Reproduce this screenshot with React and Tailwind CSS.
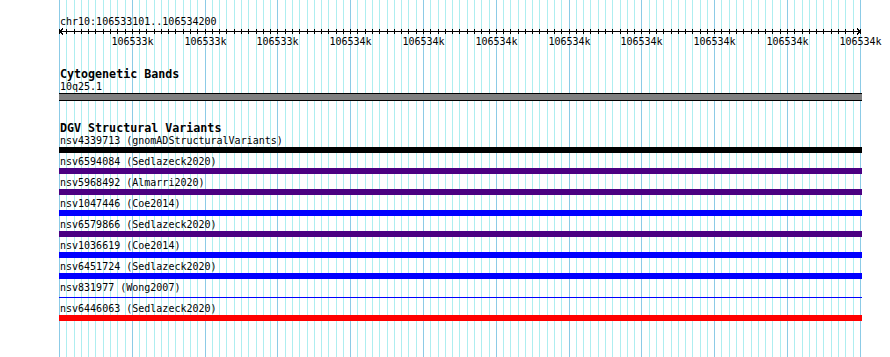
import React from 'react';

const LEFT = 59;
const STEP = 7.28; // one minor division = 10 bp
const gx = (i) => Math.round(LEFT + i * STEP) + 0.5;

const tickLabels = [
  '106533k', '106533k', '106533k',
  '106534k', '106534k', '106534k', '106534k',
  '106534k', '106534k', '106534k', '106534k',
];

const variants = [
  { id: 'nsv4339713', src: 'gnomADStructuralVariants', color: 'bg-black' },
  { id: 'nsv6594084', src: 'Sedlazeck2020', color: 'bg-[#4b0082]' },
  { id: 'nsv5968492', src: 'Almarri2020', color: 'bg-[#4b0082]' },
  { id: 'nsv1047446', src: 'Coe2014', color: 'bg-[#0000ff]' },
  { id: 'nsv6579866', src: 'Sedlazeck2020', color: 'bg-[#4b0082]' },
  { id: 'nsv1036619', src: 'Coe2014', color: 'bg-[#0000ff]' },
  { id: 'nsv6451724', src: 'Sedlazeck2020', color: 'bg-[#0000ff]' },
  { id: 'nsv831977', src: 'Wong2007', color: 'bg-[#0000ff]', thin: true },
  { id: 'nsv6446063', src: 'Sedlazeck2020', color: 'bg-[#ff0000]' },
];

const mono = "font-['DejaVu_Sans_Mono','Liberation_Mono',monospace]";

// background grid, minor every 10bp, major every 100bp
const Grid = () => (
  <svg className="absolute inset-0" width="890" height="357" shapeRendering="crispEdges">
    {Array.from({ length: 111 }, (_, i) => (
      <line
        key={i}
        x1={gx(i)} x2={gx(i)} y1="0" y2="357"
        stroke={i % 10 === 0 ? '#8ccbe6' : '#aeeef0'}
        strokeWidth="1"
      />
    ))}
  </svg>
);

const Ruler = () => (
  <svg className="absolute inset-0" width="890" height="50" shapeRendering="crispEdges">
    <line x1="60" x2="860" y1="31.5" y2="31.5" stroke="#000" />
    {Array.from({ length: 111 }, (_, i) => (
      <line key={i} x1={gx(i)} x2={gx(i)} y1="29" y2="34" stroke="#000" />
    ))}
    <polyline points="63,28.5 60,31.5 63,34.5" fill="none" stroke="#000" />
    <polyline points="857,28.5 860,31.5 857,34.5" fill="none" stroke="#000" />
    {tickLabels.map((t, k) => (
      <text
        key={k}
        x={gx((k + 1) * 10)}
        y="45"
        textAnchor="middle"
        fontFamily="'DejaVu Sans Mono', 'Liberation Mono', monospace"
        fontSize="10"
        fill="#000"
      >
        {t}
      </text>
    ))}
  </svg>
);

export default function App() {
  return (
    <div className={`relative w-[890px] h-[357px] bg-white overflow-hidden text-black ${mono}`}>
      <Grid />

      <div className="relative">
        {/* Ruler */}
        <div className="relative h-[50px]">
          <Ruler />
          <div className="relative pt-[16px] pl-[60px] text-[10px] leading-[12px]">
            chr10:106533101..106534200
          </div>
        </div>

        {/* Cytogenetic Bands */}
        <div className="pt-[17px]">
          <div className="pl-[60px] text-[11.67px] leading-[14px] font-bold">Cytogenetic Bands</div>
          <div className="pl-[60px] text-[10px] leading-[12px]">10q25.1</div>
          <div className="ml-[59px] w-[803px] h-[8px] bg-[#808080] border-y border-black" />
        </div>

        {/* DGV Structural Variants */}
        <div className="pt-[20px]">
          <div className="pl-[60px] text-[11.67px] leading-[14px] font-bold">DGV Structural Variants</div>
          <div className="flex flex-col">
            {variants.map((v) => (
              <div key={v.id} className="mb-[3px]">
                <div className="pl-[60px] text-[10px] leading-[12px] whitespace-pre">
                  {v.id} ({v.src})
                </div>
                {v.thin ? (
                  <div className="ml-[59px] w-[803px] h-[6px] flex items-center">
                    <div className={`w-full h-px ${v.color}`} />
                  </div>
                ) : (
                  <div className={`ml-[59px] w-[803px] h-[6px] ${v.color}`} />
                )}
              </div>
            ))}
          </div>
        </div>
      </div>
    </div>
  );
}
